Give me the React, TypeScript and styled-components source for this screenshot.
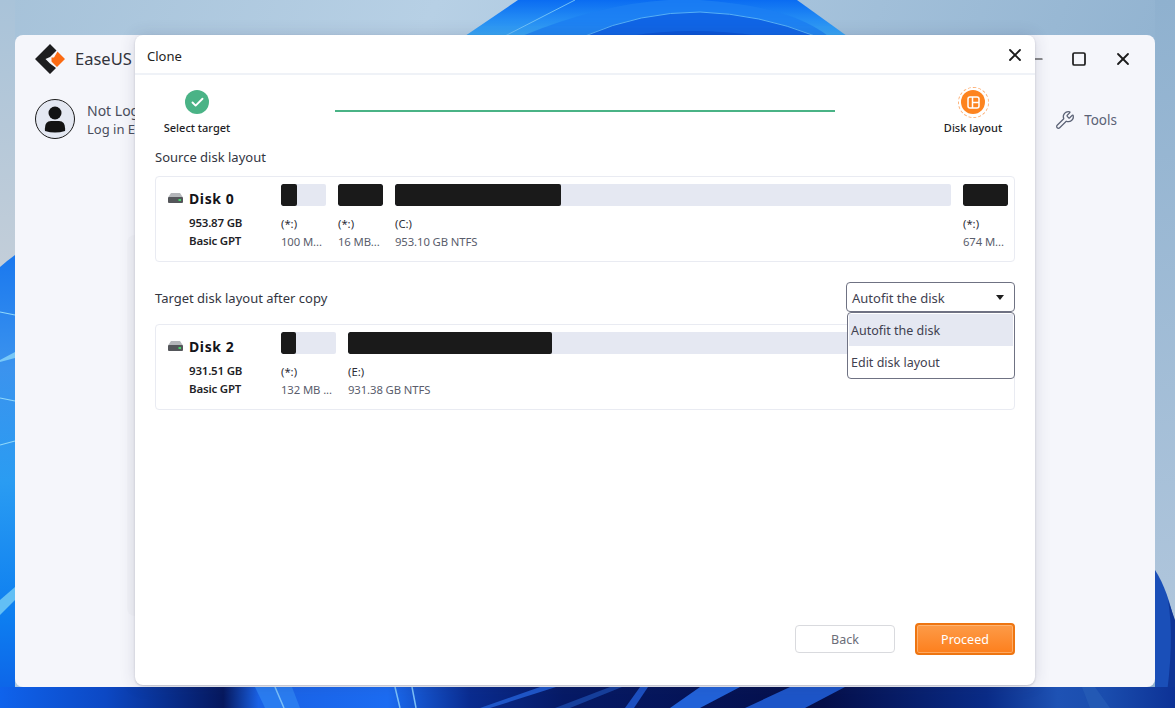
import React from "react";
import styled, { createGlobalStyle } from "styled-components";
import { Check, Wrench, X, Square, Minus } from "lucide-react";

const Global = createGlobalStyle`
  html, body { margin: 0; padding: 0; width: 1175px; height: 708px; overflow: hidden; }
  body { font-family: "Noto Sans", "Open Sans", sans-serif; font-size: 12.5px; color: #1d1d24; }
`;

const Desktop = styled.div`
  position: relative;
  width: 1175px;
  height: 708px;
  overflow: hidden;
`;
const WallpaperSvg = styled.svg`
  position: absolute;
  inset: 0;
`;
const AppWindow = styled.div`
  position: absolute;
  left: 15px;
  top: 35px;
  width: 1140px;
  height: 652px;
  box-sizing: border-box;
  padding: 9px 20px 0 20px;
  background: #f5f6fb;
  border-radius: 8px;
  display: flex;
  flex-direction: column;
`;
const AppTop = styled.div`
  display: flex;
  align-items: center;
  height: 30px;
`;
const Brand = styled.div`
  display: flex;
  align-items: center;
  gap: 10px;
  font-size: 16.5px;
  line-height: 32px;
  color: #33343c;
`;
const WindowControls = styled.div`
  margin-left: auto;
  display: flex;
  align-items: center;
  gap: 26px;
  padding-right: 2px;
  color: #1c1c1c;
`;
const AccountRow = styled.div`
  display: flex;
  align-items: center;
  margin-top: 25px;
  gap: 12px;
`;
const Avatar = styled.div`
  width: 40px;
  height: 40px;
  box-sizing: border-box;
  border: 1.5px solid #1b1b1b;
  border-radius: 50%;
  background: #e4e8f2;
  display: flex;
  align-items: center;
  justify-content: center;
`;
const AccountText = styled.div`
  white-space: nowrap;
  display: flex;
  flex-direction: column;
  gap: 2px;
  padding-top: 2px;
  line-height: 16px;
  color: #4a4d5c;
`;
const NotLogged = styled.span`
  font-size: 14px;
`;
const LogIn = styled.span`
  font-size: 13px;
`;
const ToolsLink = styled.div`
  margin-left: auto;
  margin-right: 18px;
  padding-top: 1px;
  display: flex;
  align-items: center;
  gap: 9px;
  font-size: 13.5px;
  line-height: 20px;
  color: #5b6275;
`;
const HiddenCard = styled.div`
  position: absolute;
  left: 112px;
  top: 200px;
  width: 40px;
  height: 381px;
  border-radius: 8px;
  background: #f1f2f7;
`;

const Dialog = styled.div`
  position: absolute;
  left: 135px;
  top: 35px;
  width: 900px;
  height: 650px;
  background: #fff;
  border-radius: 8px;
  box-shadow: 0 1px 2px rgba(40, 40, 70, 0.22), 0 0 16px rgba(50, 50, 90, 0.16);
  display: flex;
  flex-direction: column;
`;
const TitleBar = styled.div`
  height: 40px;
  flex: none;
  border-bottom: 2px solid #eff2f7;
  box-sizing: border-box;
  padding: 4px 10px 0 12px;
  display: flex;
  align-items: center;
  justify-content: space-between;
  font-size: 13px;
  color: #222;
`;
const CloseGlyph = styled.span`
  display: flex;
  margin-top: -3px;
  color: #1c1c1c;
`;
const Body = styled.div`
  flex: 1;
  padding: 0 20px 30px 20px;
  display: flex;
  flex-direction: column;
`;
const Stepper = styled.div`
  display: flex;
  align-items: flex-start;
  height: 75px;
  box-sizing: border-box;
  padding-top: 15px;
`;
const Step = styled.div`
  width: 84px;
  flex: none;
  display: flex;
  flex-direction: column;
  align-items: center;
`;
const StepCircle = styled.div<{ $color: string; $dashed?: boolean }>`
  position: relative;
  width: 24px;
  height: 24px;
  border-radius: 50%;
  background: ${(p) => p.$color};
  color: #fff;
  display: flex;
  align-items: center;
  justify-content: center;
  ${(p) =>
    p.$dashed
      ? `&::after { content: ""; position: absolute; inset: -3.5px; border: 1px dashed #fdb27a; border-radius: 50%; }`
      : ""}
`;
const StepLabel = styled.div`
  margin-top: 6px;
  font-size: 11px;
  line-height: 16px;
  font-weight: 500;
  white-space: nowrap;
  color: #1e1e26;
`;
const StepLine = styled.div`
  width: 500px;
  flex: none;
  height: 2px;
  margin: 20px 96px 0 96px;
  background: #4ab386;
`;
const SectionTitle = styled.div`
  font-size: 13px;
  line-height: 18px;
  color: #33353f;
`;
const SourceTitle = styled(SectionTitle)`
  margin-top: -2px;
  margin-bottom: 10px;
`;
const TargetTitle = styled(SectionTitle)`
  padding-top: 2px;
`;
const TargetHeader = styled.div`
  display: flex;
  align-items: center;
  justify-content: space-between;
  margin-top: 20px;
  margin-bottom: 12px;
  position: relative;
`;
const SelectBox = styled.div`
  width: 169px;
  height: 30px;
  box-sizing: border-box;
  border: 1px solid #6f7283;
  border-radius: 4px;
  padding: 2px 10px 0 5px;
  display: flex;
  align-items: center;
  justify-content: space-between;
  font-size: 13px;
  color: #3f4150;
`;
const Caret = styled.span`
  width: 0;
  height: 0;
  margin-top: -2px;
  border-left: 4.5px solid transparent;
  border-right: 4.5px solid transparent;
  border-top: 5px solid #1e1e1e;
`;
const Menu = styled.div`
  position: absolute;
  right: 0;
  top: 30px;
  width: 168px;
  height: 67px;
  box-sizing: border-box;
  padding: 1px;
  background: #fff;
  border: 1px solid #6f7283;
  border-radius: 4px;
  z-index: 3;
  font-size: 12.5px;
  color: #3f4150;
`;
const MenuItem = styled.div<{ $active?: boolean }>`
  height: 32px;
  line-height: 34px;
  padding-left: 2px;
  background: ${(p) => (p.$active ? "#e5e8f2" : "transparent")};
`;
const DiskCard = styled.div`
  height: 86px;
  box-sizing: border-box;
  border: 1px solid #e9ebf2;
  border-radius: 4px;
  padding: 7px 6px 0 12px;
  display: flex;
`;
const DiskInfo = styled.div`
  width: 113px;
  flex: none;
`;
const DiskName = styled.div`
  height: 28px;
  display: flex;
  align-items: center;
  gap: 6px;
  font-size: 14px;
  font-weight: 700;
  letter-spacing: 0.6px;
  color: #14141a;
`;
const DiskMeta = styled.div`
  margin-left: 21px;
  margin-top: 2px;
  font-size: 11.5px;
  line-height: 18px;
  font-weight: 600;
  color: #1f1f28;
  letter-spacing: -0.2px;
`;
const Partitions = styled.div`
  flex: 1;
  display: flex;
  gap: 12px;
  min-width: 0;
`;
const Partition = styled.div<{ $w?: number }>`
  ${(p) => (p.$w ? `width: ${p.$w}px; flex: none;` : "flex: 1;")}
  min-width: 0;
`;
const Bar = styled.div`
  height: 22px;
  border-radius: 2px;
  background: #e5e8f2;
  overflow: hidden;
`;
const BarFill = styled.div<{ $w: number }>`
  width: ${(p) => p.$w}px;
  height: 100%;
  border-radius: 2px;
  background: #1a1a1a;
`;
const PartName = styled.div`
  margin-top: 9px;
  font-size: 11.3px;
  line-height: 18px;
  color: #2c2d37;
`;
const PartSize = styled.div`
  font-size: 11.3px;
  line-height: 18px;
  color: #5a5d6c;
  white-space: nowrap;
  letter-spacing: -0.1px;
`;
const Footer = styled.div`
  margin-top: auto;
  display: flex;
  align-items: center;
  justify-content: flex-end;
  gap: 20px;
`;
const BackButton = styled.div`
  width: 100px;
  height: 28px;
  box-sizing: border-box;
  border: 1px solid #d9dade;
  border-radius: 4px;
  display: flex;
  align-items: center;
  justify-content: center;
  font-size: 12.5px;
  color: #6b6d78;
`;
const ProceedButton = styled.div`
  width: 100px;
  height: 32px;
  box-sizing: border-box;
  border: 2px solid #ee7511;
  border-radius: 4px;
  background: linear-gradient(#fd9b48, #fd7f1d);
  box-shadow: inset 0 0 0 1px rgba(255, 200, 150, 0.55);
  display: flex;
  align-items: center;
  justify-content: center;
  font-size: 12.5px;
  color: #fff;
`;

const Wallpaper = () => (
  <WallpaperSvg width="1175" height="708" viewBox="0 0 1175 708">
    <defs>
      <linearGradient id="sky" x1="0" y1="0" x2="1" y2="0.25">
        <stop offset="0" stopColor="#a6c2d9" />
        <stop offset="0.35" stopColor="#b7d0e5" />
        <stop offset="1" stopColor="#8fb1cf" />
      </linearGradient>
      <linearGradient id="skyL" x1="0" y1="0" x2="0" y2="1">
        <stop offset="0" stopColor="#a9c3d9" />
        <stop offset="1" stopColor="#c3ced9" />
      </linearGradient>
      <linearGradient id="skyR" x1="0" y1="0" x2="0" y2="1">
        <stop offset="0" stopColor="#8fb1cf" />
        <stop offset="1" stopColor="#b0c6dc" />
      </linearGradient>
      <linearGradient id="bloom" x1="0" y1="0" x2="0" y2="1">
        <stop offset="0" stopColor="#0a6cf2" />
        <stop offset="1" stopColor="#3aa8f6" />
      </linearGradient>
      <linearGradient id="leftBlue" x1="0" y1="0" x2="0" y2="1">
        <stop offset="0" stopColor="#1a78ee" />
        <stop offset="0.25" stopColor="#3b93ee" />
        <stop offset="0.5" stopColor="#2a9cf2" />
        <stop offset="0.8" stopColor="#0d7ef0" />
        <stop offset="1" stopColor="#0d5fe6" />
      </linearGradient>
      <linearGradient id="bottom" x1="0" y1="0" x2="1" y2="0">
        <stop offset="0" stopColor="#0f63ec" />
        <stop offset="0.09" stopColor="#0c48c4" />
        <stop offset="0.19" stopColor="#06185e" />
        <stop offset="0.22" stopColor="#1a62e6" />
        <stop offset="0.33" stopColor="#1c6cf2" />
        <stop offset="0.4" stopColor="#0a2c90" />
        <stop offset="0.48" stopColor="#061a66" />
        <stop offset="0.7" stopColor="#050f4a" />
        <stop offset="0.84" stopColor="#0a2c88" />
        <stop offset="0.9" stopColor="#1e52b4" />
        <stop offset="0.94" stopColor="#1a4dae" />
        <stop offset="1" stopColor="#0d3296" />
      </linearGradient>
    </defs>
    <rect width="1175" height="708" fill="url(#sky)" />
    <rect x="0" y="0" width="15" height="270" fill="url(#skyL)" />
    <rect x="1155" y="0" width="20" height="640" fill="url(#skyR)" />
    <path d="M518 0 L465 36 L847 36 L797 0 Z" fill="url(#bloom)" />
    <path d="M522 36 Q600 4 668 0 L700 0 Q790 6 828 36 Z" fill="#1b7ef2" opacity="0.8" />
    <path d="M585 36 Q640 12 700 12 Q760 14 815 36" fill="#1065e6" stroke="#56b0f6" strokeWidth="1" />
    <path d="M630 36 Q690 26 760 36 Z" fill="#0a55d8" />
    <path d="M505 36 L575 0" stroke="#6fc0f8" strokeWidth="1" fill="none" />
    <path d="M0 267 Q8 260 15 255 L15 708 L0 708 Z" fill="url(#leftBlue)" />
    <path d="M0 312 L15 315 M0 398 L15 401 M0 445 L15 441" stroke="#8fd8fa" strokeWidth="1.2" fill="none" />
    <path d="M0 360 L15 352 L15 358 L0 362 Z" fill="#79c8f7" />
    <path d="M0 600 L15 587 L15 600 L0 615 Z" fill="#62bff5" />
    <path d="M1155 570 Q1168 590 1175 625 L1175 708 L1155 708 Z" fill="#1a4fb8" />
    <path d="M1168 600 Q1175 640 1165 708 L1175 708 L1175 620 Z" fill="#0f3596" />
    <rect x="0" y="687" width="1175" height="21" fill="url(#bottom)" />
    <path d="M255 687 L265 708 L300 708 L292 687 Z" fill="#2a7cf0" />
    <path d="M275 687 L284 708 M395 687 L400 708 M412 687 L416 708" stroke="#7cc0f8" strokeWidth="1.5" />
    <path d="M480 708 L540 687 L556 687 L490 708 Z" fill="#1f56c8" />
    <path d="M555 708 L610 687 L622 687 L570 708 Z" fill="#163f9c" />
    <path d="M625 708 L640 687 L648 687 L634 708 Z" fill="#1c4fc0" />
    <path d="M670 708 L700 687 L740 687 L700 708 Z" fill="#2262d8" />
    <path d="M745 708 L790 687 L845 687 L805 708 Z" fill="#1d55c8" />
    <path d="M1090 708 L1110 708 L1095 687 L1082 687 Z" fill="#2a60b8" opacity="0.6" />
  </WallpaperSvg>
);

const LogoMark = () => (
  <svg width="30" height="30" viewBox="0 0 30 30">
    <path d="M15 0 L21.5 6.5 L15 13 L10.5 15 L15 19.5 L21 24 L15 30 L0 15 Z" fill="#1d1d1f" />
    <path d="M22.5 7.5 L30 15 L22 23 L16.5 17.5 L16.5 13.5 L19 13.5 Z" fill="#fb6a12" />
  </svg>
);

const PersonIcon = () => (
  <svg width="24" height="28" viewBox="0 0 24 28">
    <circle cx="12" cy="8" r="6.5" fill="#131313" />
    <path d="M2 26 Q1 16 8 16 L16 16 Q23 16 22 26 Q12 29 2 26 Z" fill="#131313" />
  </svg>
);

const DriveIcon = () => (
  <svg width="15" height="12" viewBox="0 0 15 12">
    <path d="M3 1 L12 1 L15 5.5 L0 5.5 Z" fill="#b4b6ba" />
    <rect x="0" y="5" width="15" height="6" rx="1" fill="#54565a" />
    <rect x="10.5" y="7" width="2.5" height="2" fill="#45d86a" />
  </svg>
);

const LayoutGlyph = () => (
  <svg width="13" height="13" viewBox="0 0 13 13" fill="none" stroke="#fff" strokeWidth="1.5">
    <rect x="1" y="1" width="11" height="11" rx="2" />
    <path d="M5.5 1 V12 M5.5 6.5 H12" />
  </svg>
);

type Part = { w?: number; fill: number; name: string; size: string };
const Disk = ({ name, cap, parts }: { name: string; cap: string; parts: Part[] }) => (
  <DiskCard>
    <DiskInfo>
      <DiskName>
        <DriveIcon />
        {name}
      </DiskName>
      <DiskMeta>
        <div>{cap}</div>
        <div>Basic GPT</div>
      </DiskMeta>
    </DiskInfo>
    <Partitions>
      {parts.map((p, i) => (
        <Partition key={i} $w={p.w}>
          <Bar>
            <BarFill $w={p.fill} />
          </Bar>
          <PartName>{p.name}</PartName>
          <PartSize>{p.size}</PartSize>
        </Partition>
      ))}
    </Partitions>
  </DiskCard>
);

export default function App() {
  return (
    <Desktop>
      <Global />
      <Wallpaper />
      <AppWindow>
        <AppTop>
          <Brand>
            <LogoMark />
            EaseUS
          </Brand>
          <WindowControls>
            <Minus size={14} strokeWidth={2} />
            <Square size={16} strokeWidth={2.6} />
            <X size={20} strokeWidth={2.2} />
          </WindowControls>
        </AppTop>
        <AccountRow>
          <Avatar>
            <PersonIcon />
          </Avatar>
          <AccountText>
            <NotLogged>Not Log</NotLogged>
            <LogIn>Log in E</LogIn>
          </AccountText>
          <ToolsLink>
            <Wrench size={20} strokeWidth={1.5} />
            Tools
          </ToolsLink>
        </AccountRow>
        <HiddenCard />
      </AppWindow>
      <Dialog>
        <TitleBar>
          Clone
          <CloseGlyph>
            <X size={20} strokeWidth={2.2} />
          </CloseGlyph>
        </TitleBar>
        <Body>
          <Stepper>
            <Step>
              <StepCircle $color="#4ab386">
                <Check size={15} strokeWidth={3} />
              </StepCircle>
              <StepLabel>Select target</StepLabel>
            </Step>
            <StepLine />
            <Step>
              <StepCircle $color="#fd8420" $dashed>
                <LayoutGlyph />
              </StepCircle>
              <StepLabel>Disk layout</StepLabel>
            </Step>
          </Stepper>
          <SourceTitle>Source disk layout</SourceTitle>
          <Disk
            name="Disk 0"
            cap="953.87 GB"
            parts={[
              { w: 45, fill: 16, name: "(*:)", size: "100 M..." },
              { w: 45, fill: 45, name: "(*:)", size: "16 MB..." },
              { fill: 166, name: "(C:)", size: "953.10 GB NTFS" },
              { w: 45, fill: 45, name: "(*:)", size: "674 M..." },
            ]}
          />
          <TargetHeader>
            <TargetTitle>Target disk layout after copy</TargetTitle>
            <SelectBox>
              Autofit the disk
              <Caret />
            </SelectBox>
            <Menu>
              <MenuItem $active>Autofit the disk</MenuItem>
              <MenuItem>Edit disk layout</MenuItem>
            </Menu>
          </TargetHeader>
          <Disk
            name="Disk 2"
            cap="931.51 GB"
            parts={[
              { w: 55, fill: 15, name: "(*:)", size: "132 MB ..." },
              { fill: 204, name: "(E:)", size: "931.38 GB NTFS" },
            ]}
          />
          <Footer>
            <BackButton>Back</BackButton>
            <ProceedButton>Proceed</ProceedButton>
          </Footer>
        </Body>
      </Dialog>
    </Desktop>
  );
}
